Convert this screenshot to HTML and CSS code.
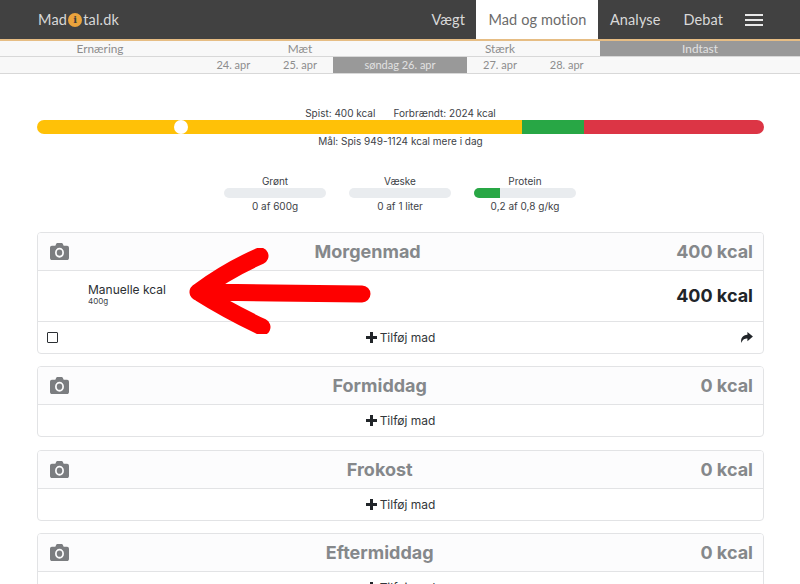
FILE: index.html
```html
<!DOCTYPE html>
<html lang="da">
<head>
<meta charset="utf-8">
<title>Madital.dk</title>
<link rel="stylesheet" href="styles.css">
</head>
<body>
<header class="topbar">
  <a class="brand">Mad<span class="brand-i">i</span>tal.dk</a>
  <nav class="menu">
    <a class="menu-item">Vægt</a>
    <a class="menu-item is-current">Mad og motion</a>
    <a class="menu-item">Analyse</a>
    <a class="menu-item">Debat</a>
    <span class="burger"><i></i><i></i><i></i></span>
  </nav>
</header>
<div class="tabs">
  <span>Ernæring</span><span>Mæt</span><span>Stærk</span><span class="is-active">Indtast</span>
</div>
<div class="dates">
  <span class="d-one d-first">24. apr</span>
  <span class="d-one">25. apr</span>
  <span class="d-two is-active">søndag 26. apr</span>
  <span class="d-one">27. apr</span>
  <span class="d-one">28. apr</span>
</div>

<main class="content">
  <section class="energy">
    <p class="energy-line"><span>Spist: 400 kcal</span><span>Forbrændt: 2024 kcal</span></p>
    <div class="energy-bar">
      <div class="seg seg-yellow"></div>
      <div class="seg seg-green"></div>
      <div class="seg seg-red"></div>
      <span class="knob"></span>
    </div>
    <p class="energy-goal">Mål: Spis 949-1124 kcal mere i dag</p>
  </section>

  <section class="goals">
    <div class="goal">
      <div class="goal-name">Grønt</div>
      <div class="goal-track"></div>
      <div class="goal-value">0 af 600g</div>
    </div>
    <div class="goal">
      <div class="goal-name">Væske</div>
      <div class="goal-track"></div>
      <div class="goal-value">0 af 1 liter</div>
    </div>
    <div class="goal">
      <div class="goal-name">Protein</div>
      <div class="goal-track"><div class="goal-fill"></div></div>
      <div class="goal-value">0,2 af 0,8 g/kg</div>
    </div>
  </section>

  <section class="meal">
    <div class="meal-head">
      <svg class="camera" viewBox="0 0 20 16" preserveAspectRatio="none"><use href="#camera-icon"/></svg>
      <h2>Morgenmad</h2>
      <span class="meal-kcal">400 kcal</span>
    </div>
    <div class="meal-item">
      <div class="item-text">
        <div class="item-name">Manuelle kcal</div>
        <div class="item-amount">400g</div>
      </div>
      <span class="item-kcal">400 kcal</span>
    </div>
    <div class="meal-foot">
      <span class="check"></span>
      <a class="add"><span class="plus"></span>Tilføj mad</a>
      <svg class="share" viewBox="0 0 14 12"><path d="M8 0 14 5 8 10V7.200C5 7.200 2.800 8 1.400 12 .2 6.800 3 3.200 8 3Z"/></svg>
    </div>
  </section>

  <section class="meal">
    <div class="meal-head">
      <svg class="camera" viewBox="0 0 20 16" preserveAspectRatio="none"><use href="#camera-icon"/></svg>
      <h2>Formiddag</h2>
      <span class="meal-kcal">0 kcal</span>
    </div>
    <div class="meal-foot">
      <a class="add"><span class="plus"></span>Tilføj mad</a>
    </div>
  </section>

  <section class="meal">
    <div class="meal-head">
      <svg class="camera" viewBox="0 0 20 16" preserveAspectRatio="none"><use href="#camera-icon"/></svg>
      <h2>Frokost</h2>
      <span class="meal-kcal">0 kcal</span>
    </div>
    <div class="meal-foot">
      <a class="add"><span class="plus"></span>Tilføj mad</a>
    </div>
  </section>

  <section class="meal">
    <div class="meal-head">
      <svg class="camera" viewBox="0 0 20 16" preserveAspectRatio="none"><use href="#camera-icon"/></svg>
      <h2>Eftermiddag</h2>
      <span class="meal-kcal">0 kcal</span>
    </div>
    <div class="meal-foot">
      <a class="add"><span class="plus"></span>Tilføj mad</a>
    </div>
  </section>
</main>

<!-- Hand-drawn red arrow laid over the breakfast card -->
<svg class="scribble" viewBox="0 0 190 86">
  <path d="M175 46C130 45 60 45 11 44M11 44C30 30 50 18 73 8M11 44C30 56 52 68 75 79"/>
</svg>

<svg class="defs" aria-hidden="true">
  <symbol id="camera-icon" viewBox="0 0 20 16" preserveAspectRatio="none">
    <path fill-rule="evenodd" d="M2 2.600h3.600L6.600.6C6.800.2 7.100 0 7.500 0h5c.4 0 .7.2.9.6l1 2H18c1.100 0 2 .9 2 2V14c0 1.100-.9 2-2 2H2c-1.100 0-2-.9-2-2V4.600c0-1.100.9-2 2-2ZM10 4.400a4.700 4.700 0 1 0 0 9.400 4.700 4.700 0 0 0 0-9.400ZM10 6.200a2.900 2.900 0 1 1 0 5.800 2.900 2.900 0 0 1 0-5.800Z"/>
  </symbol>
</svg>
</body>
</html>
```
FILE: styles.css
```css
* { box-sizing: border-box; }

html, body {
  margin: 0;
  height: 584px;
  overflow: hidden;
}

body {
  position: relative;
  background: #fff;
  color: #212529;
  font-family: Inter, "Liberation Sans", sans-serif;
}

/* Top navigation */
.topbar {
  height: 41px;
  background: #414141;
  border-bottom: 2px solid #e6bd84;
  display: flex;
  justify-content: space-between;
  padding: 0 37px 0 38px;
  font-family: Lato, "Open Sans", sans-serif;
}

.brand {
  color: #d8d8d8;
  font-size: 14.5px;
  line-height: 39px;
  letter-spacing: 0.2px;
  display: flex;
  align-items: center;
}

.brand-i {
  width: 14px;
  height: 14px;
  margin: 0 1px;
  border-radius: 50%;
  background: #eba33c;
  color: #3d3d3d;
  font: bold 10px/14px "DejaVu Serif", serif;
  text-align: center;
}

.menu {
  display: flex;
  align-items: stretch;
}

.menu-item {
  color: #d9d9d9;
  font-size: 14.5px;
  line-height: 39px;
  padding: 0 11.5px;
  letter-spacing: 0.1px;
}

.menu-item.is-current {
  background: #fff;
  color: #6b6b6b;
  padding: 0 12px;
}

.burger {
  width: 18px;
  margin-left: 10.5px;
  display: flex;
  flex-direction: column;
  justify-content: center;
  gap: 3px;
}

.burger i {
  height: 2px;
  background: #e8e8e8;
}

/* Section tabs and date strip */
.tabs, .dates {
  display: grid;
  background: #f8f8f8;
  color: #8d8d8d;
  font-family: Lato, "Open Sans", sans-serif;
  font-size: 11px;
  text-align: center;
  border-bottom: 1px solid #d8d8d8;
}

.tabs {
  grid-template-columns: repeat(4, 1fr);
  height: 16px;
  line-height: 15px;
  font-size: 11.8px;
}

.dates {
  grid-template-columns: repeat(12, 1fr);
  height: 17px;
  line-height: 16px;
}

.tabs .is-active, .dates .is-active {
  background: #999;
  color: #e2e2e2;
}

.d-one { grid-column: span 1; }
.d-first { grid-column-start: 4; }
.d-two { grid-column: span 2; }

/* Page body */
.content {
  padding: 32px 36px 0 37px;
}

.energy-line, .energy-goal {
  margin: 0;
  font-size: 10px;
  line-height: 15px;
  color: #3d4247;
  text-align: center;
}

.energy-line {
  display: flex;
  justify-content: center;
  gap: 18px;
  line-height: 14px;
}

.energy-bar {
  position: relative;
  display: flex;
  height: 14px;
  border-radius: 7px;
  overflow: hidden;
}

.seg-yellow { width: 485px; background: #ffc107; }
.seg-green { width: 62px; background: #28a745; }
.seg-red { flex: 1; background: #dc3545; }

.knob {
  position: absolute;
  left: 137px;
  top: 0;
  width: 14px;
  height: 14px;
  border-radius: 50%;
  background: #fff;
}

.goals {
  display: flex;
  justify-content: center;
  gap: 23px;
  margin-top: 25px;
  padding-right: 1px;
}

.goal {
  width: 102px;
  text-align: center;
  font-size: 10px;
  line-height: 14px;
  color: #3d4247;
}

.goal-name {
  height: 14px;
}

.goal-track {
  height: 10px;
  border-radius: 5px;
  background: #e9ecef;
  overflow: hidden;
}

.goal-fill {
  width: 25%;
  height: 100%;
  background: #28a745;
}

.goal-value {
  margin-top: 1px;
}

/* Meal cards */
.meal {
  border: 1px solid #e2e3e5;
  border-radius: 4px;
  margin-bottom: 12.5px;
  overflow: hidden;
}

.goals + .meal {
  margin-top: 19px;
}

.meal-head {
  position: relative;
  height: 38px;
  background: #fcfcfd;
  border-bottom: 1px solid #e2e3e5;
  display: flex;
  align-items: center;
  padding: 0 10px 0 12px;
}

.camera {
  width: 19px;
  height: 17px;
  flex: none;
  fill: #7b7d80;
}

.meal-head h2 {
  flex: 1;
  margin: 0 10px 0 0;
  text-align: center;
  font-size: 18px;
  font-weight: 700;
  color: #85888b;
}

.meal-kcal {
  font-size: 18px;
  font-weight: 700;
  color: #85888b;
}

.meal-item {
  height: 50.5px;
  border-bottom: 1px solid #e2e3e5;
  display: flex;
  align-items: center;
  justify-content: space-between;
  padding: 0 10px 0 50px;
}

.item-text {
  margin-top: -2px;
}

.item-name {
  font-size: 12px;
  line-height: 14px;
  color: #2b2f33;
}

.item-amount {
  font-size: 8px;
  line-height: 9px;
  color: #3d4247;
}

.item-kcal {
  font-size: 18px;
  font-weight: 700;
  color: #212529;
}

.meal-foot {
  height: 31px;
  position: relative;
  display: flex;
  align-items: center;
  justify-content: center;
  padding: 0 10px;
}

.add {
  display: flex;
  align-items: center;
  gap: 3px;
  font-size: 12px;
  color: #33373b;
}

.plus {
  position: relative;
  width: 11px;
  height: 11px;
}

.plus::before, .plus::after {
  content: "";
  position: absolute;
  background: #212529;
}

.plus::before { left: 0; right: 0; top: 4px; height: 3px; }
.plus::after { top: 0; bottom: 0; left: 4px; width: 3px; }

.check {
  position: absolute;
  left: 9px;
  top: 10px;
  width: 11px;
  height: 11px;
  border: 1.500px solid #2b2f33;
  border-radius: 1px;
}

.share {
  position: absolute;
  right: 10px;
  top: 10px;
  width: 13px;
  height: 11px;
  fill: #212529;
}

/* Marker drawn over the card */
.scribble {
  position: absolute;
  left: 187px;
  top: 248px;
  width: 190px;
  height: 86px;
  fill: none;
  stroke: #fe0000;
  stroke-width: 17px;
  stroke-linecap: round;
  stroke-linejoin: round;
}

.defs {
  position: absolute;
  width: 0;
  height: 0;
}
```
